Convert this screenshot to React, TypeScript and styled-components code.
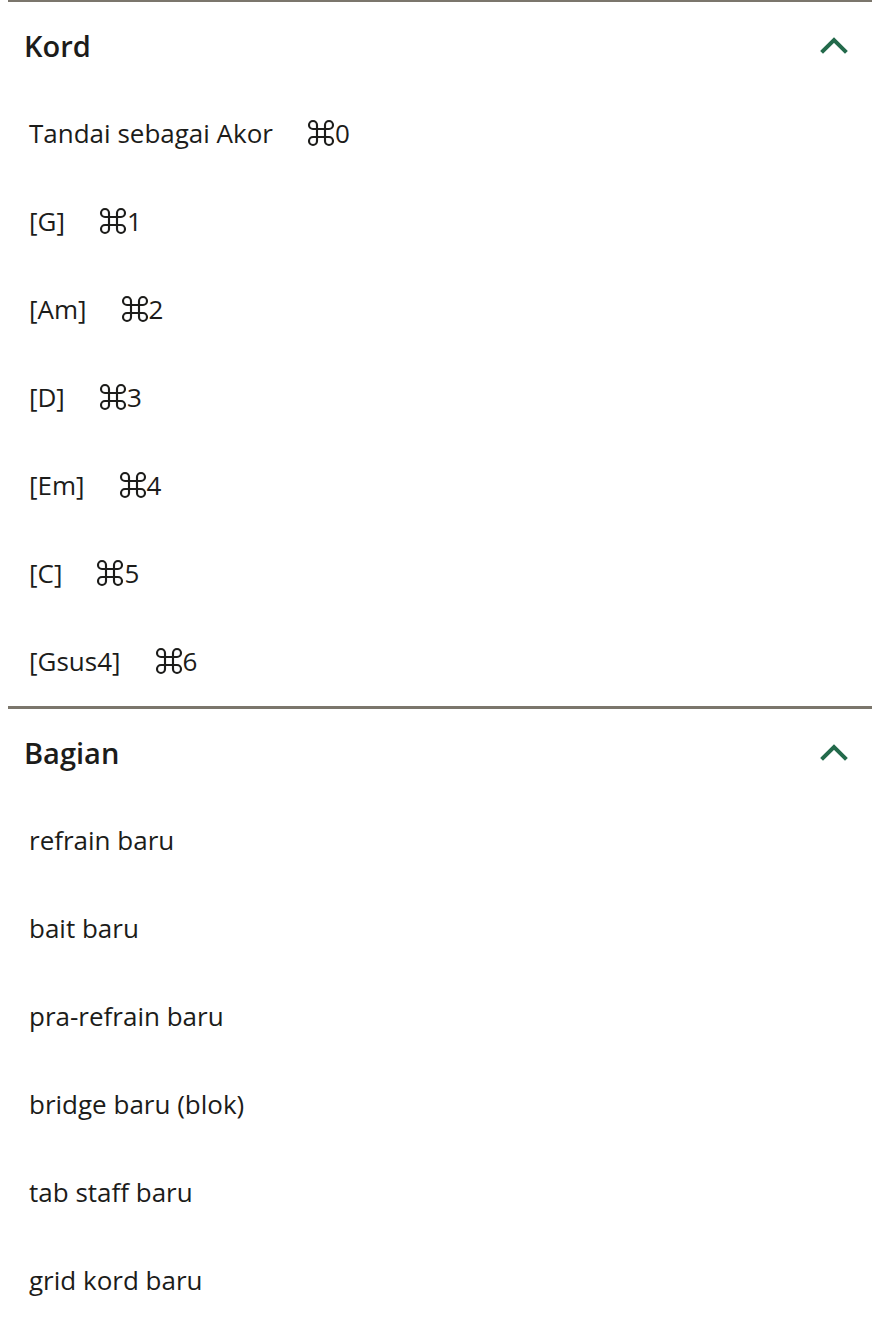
import React from 'react';
import styled, { createGlobalStyle } from 'styled-components';
import { Command } from 'lucide-react';

const GlobalStyle = createGlobalStyle`
  html, body {
    margin: 0;
    padding: 0;
    background: #ffffff;
  }
  body {
    font-family: "Open Sans", "Noto Sans", "DejaVu Sans", sans-serif;
    color: #1c1c1a;
  }
`;

const Panel = styled.div`
  padding: 0 8px;
  margin-top: -1px;
`;

const Section = styled.section`
  border-top: 3px solid #7b766c;
`;

const Header = styled.button`
  display: flex;
  align-items: center;
  justify-content: space-between;
  width: 100%;
  height: 88px;
  padding: 0 24px 2px 16px;
  border: 0;
  background: transparent;
  font-family: inherit;
  font-size: 29px;
  font-weight: 600;
  color: #1c1c1a;
  cursor: pointer;
`;

const Chevron = styled.svg`
  width: 28px;
  height: 18px;
  color: #236a4b;
`;

const Item = styled.div`
  display: flex;
  align-items: center;
  height: 88px;
  padding: 0 0 3px 21px;
  box-sizing: border-box;
  font-size: 26px;
  color: #1c1c1a;
`;

const Shortcut = styled.span`
  margin-left: 32px;
  display: inline-flex;
  align-items: center;
`;

const CmdIcon = styled(Command)`
  width: 32px;
  height: 32px;
  margin-right: -2px;
  color: #1c1c1a;
`;

interface Entry {
  label: string;
  key?: string;
}

const chords: Entry[] = [
  { label: 'Tandai sebagai Akor', key: '0' },
  { label: '[G]', key: '1' },
  { label: '[Am]', key: '2' },
  { label: '[D]', key: '3' },
  { label: '[Em]', key: '4' },
  { label: '[C]', key: '5' },
  { label: '[Gsus4]', key: '6' },
];

const parts: Entry[] = [
  { label: 'refrain baru' },
  { label: 'bait baru' },
  { label: 'pra-refrain baru' },
  { label: 'bridge baru (blok)' },
  { label: 'tab staff baru' },
  { label: 'grid kord baru' },
];

function Group(props: { title: string; entries: Entry[] }) {
  return (
    <Section>
      <Header>
        <span>{props.title}</span>
        <Chevron viewBox="0 0 28 18" fill="none">
          <path d="M3 15 L14 4 L25 15" stroke="currentColor" strokeWidth="4" strokeLinecap="square" />
        </Chevron>
      </Header>
      {props.entries.map((e) => (
        <Item key={e.label}>
          <span>{e.label}</span>
          {e.key && (
            <Shortcut>
              <CmdIcon strokeWidth={1.6} />
              {e.key}
            </Shortcut>
          )}
        </Item>
      ))}
    </Section>
  );
}

export default function App() {
  return (
    <>
      <GlobalStyle />
      <Panel>
        <Group title="Kord" entries={chords} />
        <Group title="Bagian" entries={parts} />
      </Panel>
    </>
  );
}
